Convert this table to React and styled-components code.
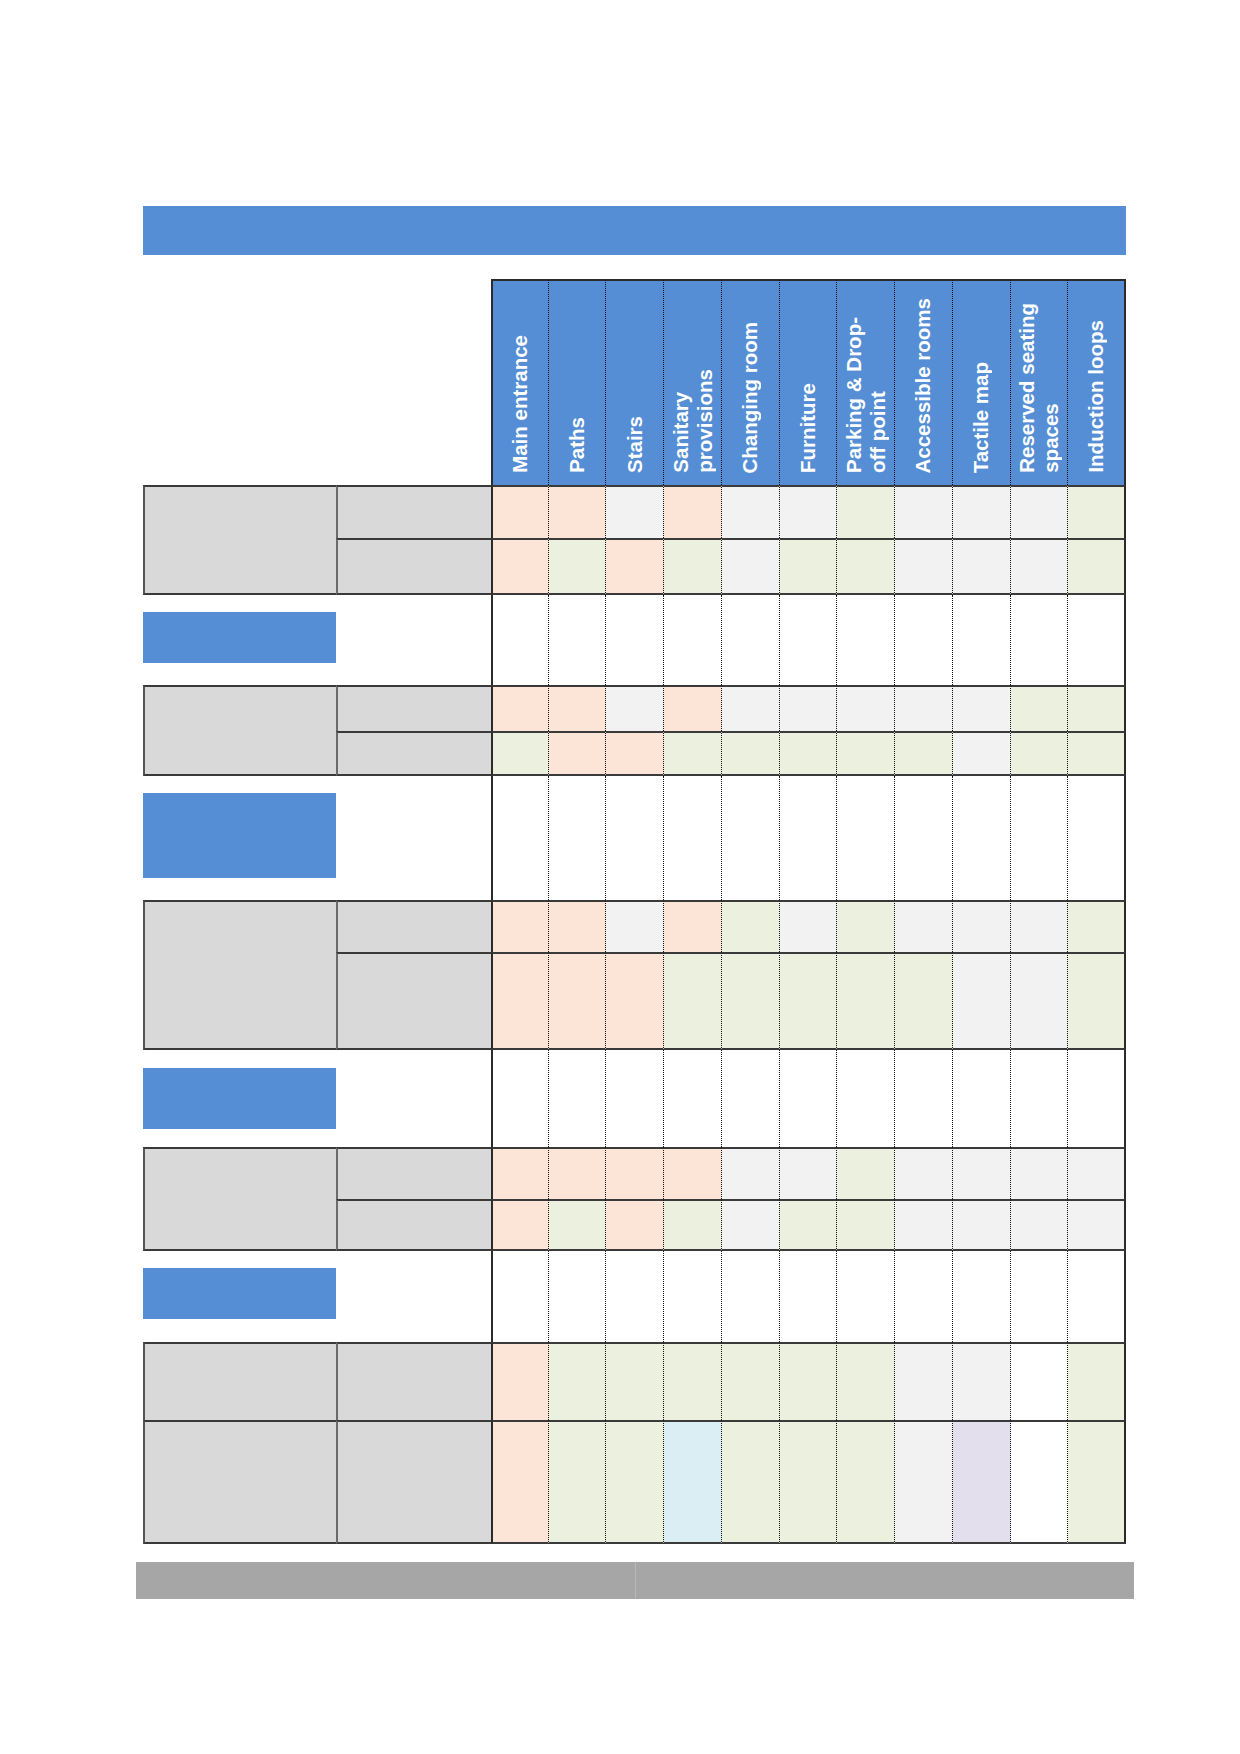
import styled, { createGlobalStyle } from "styled-components";

const GlobalStyle = createGlobalStyle`
  html, body {
    margin: 0;
    padding: 0;
    background: #ffffff;
  }
  body {
    font-family: "Liberation Sans", Arial, sans-serif;
  }
`;

const TONES = {
  p: "#FCE4D6",
  g: "#EBF1DE",
  n: "#F2F2F2",
  w: "#FFFFFF",
  b: "#DAEEF3",
  l: "#E4DFEC",
};

const LINE = "2px solid #3a3a3a";
const EDGE = "2px solid #2b2b2b";
const DOTS = "1px dotted #111111";

const headers = [
  ["Main entrance"],
  ["Paths"],
  ["Stairs"],
  ["Sanitary", "provisions"],
  ["Changing room"],
  ["Furniture"],
  ["Parking & Drop-", "off point"],
  ["Accessible rooms"],
  ["Tactile map"],
  ["Reserved seating", "spaces"],
  ["Induction loops"],
];

// p peach, g green, n grey, w white, b blue, l lavender
const blocks = [
  { type: "group", merged: true, rows: [{ h: 53, cells: "ppnpnngnnng" }, { h: 57, cells: "pgpgnggnnng" }] },
  { type: "section", h: 90, box: 51, top: 17 },
  { type: "group", merged: true, rows: [{ h: 46, cells: "ppnpnnnnngg" }, { h: 45, cells: "gppgggggngg" }] },
  { type: "section", h: 124, box: 85, top: 17 },
  { type: "group", merged: true, rows: [{ h: 52, cells: "ppnpgngnnng" }, { h: 98, cells: "pppgggggnng" }] },
  { type: "section", h: 97, box: 61, top: 18 },
  { type: "group", merged: true, rows: [{ h: 52, cells: "ppppnngnnnn" }, { h: 52, cells: "pgpgnggnnnn" }] },
  { type: "section", h: 91, box: 51, top: 17 },
  { type: "group", merged: false, rows: [{ h: 78, cells: "pggggggnnwg" }, { h: 124, cells: "pggbgggnlwg" }] },
];

const Page = styled.div`
  min-height: 1754px;
  padding-top: 206px;
  box-sizing: border-box;
`;

const Banner = styled.div`
  margin-left: 143px;
  width: 983px;
  height: 49px;
  background: #558ed5;
`;

const Table = styled.div`
  margin: 24px 0 0 143px;
  width: 983px;
  display: flex;
  flex-direction: column;
`;

const Grid = styled.div`
  display: grid;
  grid-template-columns: 193px 155px repeat(11, minmax(0, 1fr));
  grid-template-rows: ${(p) => p.$rows};
  & > * {
    box-sizing: border-box;
  }
`;

const Corner = styled.div`
  grid-column: 1 / 3;
`;

const HeadCell = styled.div`
  background: #558ed5;
  border-top: ${EDGE};
  border-left: ${(p) => (p.$first ? EDGE : "none")};
  border-right: ${(p) => (p.$last ? EDGE : DOTS)};
  display: flex;
  justify-content: center;
  align-items: flex-end;
  padding-bottom: 12px;
`;

const HeadLabel = styled.span`
  writing-mode: vertical-rl;
  transform: rotate(180deg);
  color: #ffffff;
  font-family: "Liberation Sans", Arial, sans-serif;
  font-weight: bold;
  font-size: 20.5px;
  line-height: 24px;
  white-space: nowrap;
`;

const GroupLabel = styled.div`
  grid-column: 1;
  grid-row: ${(p) => p.$span};
  background: #d9d9d9;
  border-left: 2px solid #555555;
  border-top: ${LINE};
  border-bottom: ${(p) => (p.$bottom ? LINE : "none")};
`;

const SubLabel = styled.div`
  grid-column: 2;
  background: #d9d9d9;
  border-left: 2px solid #6b6b6b;
  border-top: ${LINE};
  border-bottom: ${(p) => (p.$bottom ? LINE : "none")};
`;

const DataCell = styled.div`
  background: ${(p) => TONES[p.$tone]};
  border-top: ${(p) => (p.$top ? LINE : "none")};
  border-bottom: ${(p) => (p.$bottom ? LINE : "none")};
  border-left: ${(p) => (p.$first ? EDGE : "none")};
  border-right: ${(p) => (p.$last ? EDGE : DOTS)};
`;

const SectionLabel = styled.div`
  grid-column: 1;
  padding-top: ${(p) => p.$top}px;
`;

const BlueBox = styled.div`
  height: ${(p) => p.$h}px;
  background: #558ed5;
`;

const Spacer = styled.div`
  grid-column: 2;
`;

const Footer = styled.div`
  margin: 18px 0 0 136px;
  width: 998px;
  height: 37px;
  display: flex;
`;

const FooterHalf = styled.div`
  flex: 1;
  background: #a6a6a6;
  border-right: ${(p) => (p.$divider ? "1px solid #b8b8b8" : "none")};
`;

function HeaderRow() {
  return (
    <Grid $rows="206px">
      <Corner />
      {headers.map((lines, i) => (
        <HeadCell key={i} $first={i === 0} $last={i === headers.length - 1}>
          <HeadLabel>
            {lines.map((l, j) => (
              <span key={j}>
                {j > 0 && <br />}
                {l}
              </span>
            ))}
          </HeadLabel>
        </HeadCell>
      ))}
    </Grid>
  );
}

function Group({ rows, merged }) {
  const last = rows.length - 1;
  return (
    <Grid $rows={rows.map((r) => r.h + "px").join(" ")}>
      {merged && <GroupLabel $span="1 / -1" $bottom />}
      {rows.map((row, r) => [
        !merged && <GroupLabel key={"g" + r} $span={r + 1} $bottom={r === last} />,
        <SubLabel key={"s" + r} style={{ gridRow: r + 1 }} $bottom={r === last} />,
        ...row.cells.split("").map((tone, c) => (
          <DataCell
            key={r + "-" + c}
            style={{ gridRow: r + 1 }}
            $tone={tone}
            $top
            $bottom={r === last}
            $first={c === 0}
            $last={c === 10}
          />
        )),
      ])}
    </Grid>
  );
}

function Section({ h, box, top }) {
  return (
    <Grid $rows={h + "px"}>
      <SectionLabel $top={top}>
        <BlueBox $h={box} />
      </SectionLabel>
      <Spacer />
      {Array.from({ length: 11 }, (_, c) => (
        <DataCell key={c} $tone="w" $first={c === 0} $last={c === 10} />
      ))}
    </Grid>
  );
}

export default function App() {
  return (
    <>
      <GlobalStyle />
      <Page>
        <Banner />
        <Table>
          <HeaderRow />
          {blocks.map((b, i) =>
            b.type === "group" ? (
              <Group key={i} rows={b.rows} merged={b.merged} />
            ) : (
              <Section key={i} h={b.h} box={b.box} top={b.top} />
            )
          )}
        </Table>
        <Footer>
          <FooterHalf $divider />
          <FooterHalf />
        </Footer>
      </Page>
    </>
  );
}
